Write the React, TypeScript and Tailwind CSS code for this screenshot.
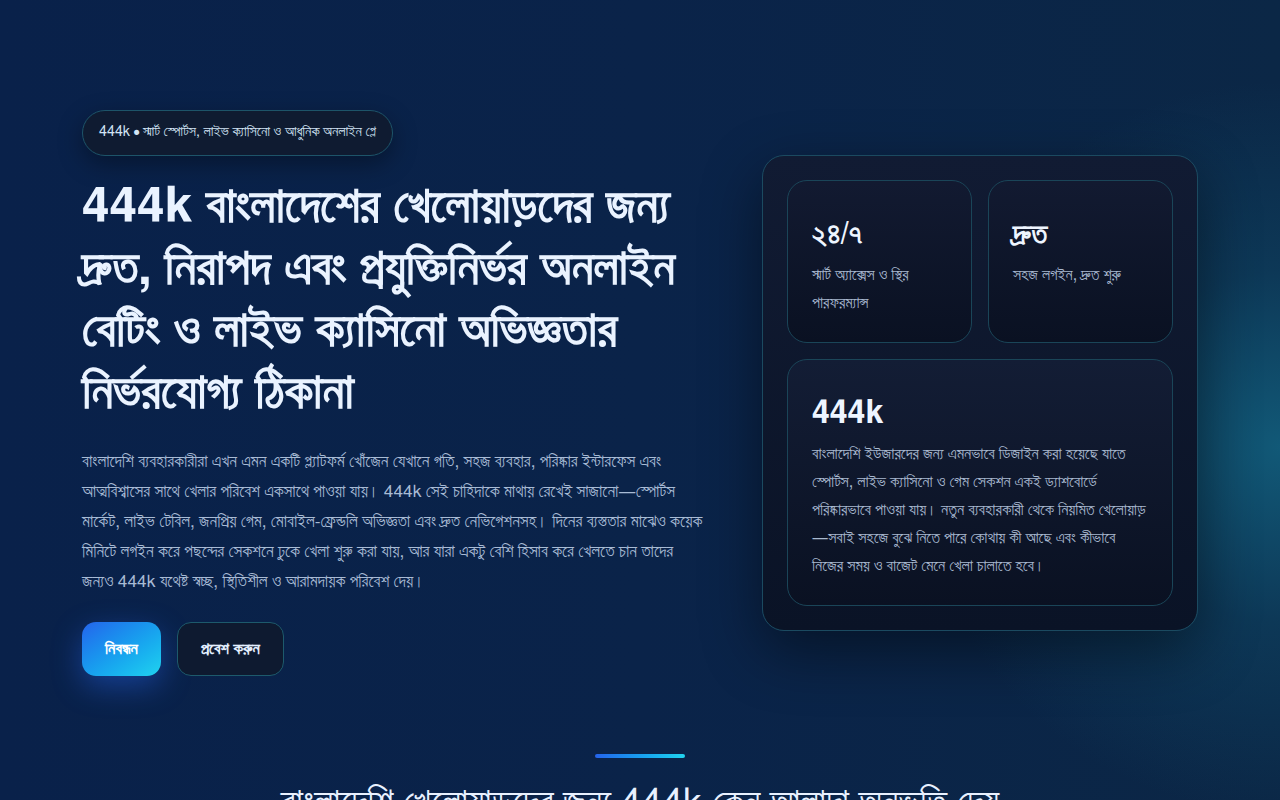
import React from "react";

export default function App() {
  return (
    <div
      className="min-h-[800px] w-full overflow-hidden text-[#e8f1ff] bg-[radial-gradient(circle_at_100%_54%,rgba(20,110,140,0.7),rgba(18,100,130,0.28)_13%,transparent_27%),linear-gradient(90deg,#09214a_0%,#0a2349_50%,#0b2746_100%)]"
      style={{ fontFamily: 'FreeSans, "Liberation Sans", Arial, sans-serif' }}
    >
      <section className="mx-auto w-[1116px] pt-[110px] pb-[78px] flex items-center justify-between">
        <div className="w-[626px] flex flex-col">
          <div className="self-start h-[46px] px-4 flex items-center rounded-full border border-[#1d5469] bg-[#0f1b31] text-[14.3px] text-[#d3e4f5] shadow-[0_8px_24px_rgba(0,0,0,0.35)]">
            444k • স্মার্ট স্পোর্টস, লাইভ ক্যাসিনো ও আধুনিক অনলাইন প্লে
          </div>
          <h1 className="mt-[20px] text-[49.5px] leading-[62px] font-bold text-[#eaf3ff]">
            444k বাংলাদেশের খেলোয়াড়দের জন্য দ্রুত, নিরাপদ এবং প্রযুক্তিনির্ভর অনলাইন বেটিং ও লাইভ ক্যাসিনো অভিজ্ঞতার নির্ভরযোগ্য ঠিকানা
          </h1>
          <p className="mt-[23px] text-[17.3px] leading-[30px] text-[#a8bbd5]">
            বাংলাদেশি ব্যবহারকারীরা এখন এমন একটি প্ল্যাটফর্ম খোঁজেন যেখানে গতি, সহজ ব্যবহার, পরিষ্কার ইন্টারফেস এবং আত্মবিশ্বাসের সাথে খেলার পরিবেশ একসাথে পাওয়া যায়। 444k সেই চাহিদাকে মাথায় রেখেই সাজানো—স্পোর্টস মার্কেট, লাইভ টেবিল, জনপ্রিয় গেম, মোবাইল-ফ্রেন্ডলি অভিজ্ঞতা এবং দ্রুত নেভিগেশনসহ। দিনের ব্যস্ততার মাঝেও কয়েক মিনিটে লগইন করে পছন্দের সেকশনে ঢুকে খেলা শুরু করা যায়, আর যারা একটু বেশি হিসাব করে খেলতে চান তাদের জন্যও 444k যথেষ্ট স্বচ্ছ, স্থিতিশীল ও আরামদায়ক পরিবেশ দেয়।
          </p>
          <div className="mt-[25px] flex gap-4">
            <button className="h-[54px] px-[23px] rounded-[14px] bg-gradient-to-br from-[#2563eb] to-[#22d3ee] text-white font-bold text-[16.5px] shadow-[0_10px_30px_rgba(37,99,235,0.45)]">
              নিবন্ধন
            </button>
            <button className="h-[54px] px-[23px] rounded-[14px] border border-[#1d5a6c] bg-[#0e1a30] text-[#e3efff] font-bold text-[16.5px]">
              প্রবেশ করুন
            </button>
          </div>
        </div>

        <div className="w-[436px] rounded-[22px] border border-[#1b4a60] bg-gradient-to-b from-[#111b33] to-[#0a1326] p-6 shadow-[0_20px_60px_rgba(0,0,0,0.45)]">
          <div className="grid grid-cols-2 gap-4">
            <div className="rounded-[20px] border border-[#1a4558] bg-gradient-to-b from-[#121a31] to-[#0a1122] px-6 pt-[37px] pb-[25px]">
              <div className="text-[30px] leading-[34px] font-bold text-[#eef5ff]">২৪/৭</div>
              <div className="mt-[9px] text-[16px] leading-[28px] text-[#a9b9d0]">স্মার্ট অ্যাক্সেস ও স্থির পারফরম্যান্স</div>
            </div>
            <div className="rounded-[20px] border border-[#1a4558] bg-gradient-to-b from-[#121a31] to-[#0a1122] px-6 pt-[37px] pb-[25px]">
              <div className="text-[30px] leading-[34px] font-bold text-[#eef5ff]">দ্রুত</div>
              <div className="mt-[9px] text-[16px] leading-[28px] text-[#a9b9d0]">সহজ লগইন, দ্রুত শুরু</div>
            </div>
          </div>
          <div className="mt-4 rounded-[20px] border border-[#1a4558] bg-gradient-to-b from-[#131d35] to-[#0a1122] px-6 pt-[33px] pb-[25px]">
            <div className="text-[32px] leading-[40px] font-bold text-[#eef5ff]">444k</div>
            <p className="mt-[7px] text-[16.2px] leading-[28px] text-[#a9b9d0]">
              বাংলাদেশি ইউজারদের জন্য এমনভাবে ডিজাইন করা হয়েছে যাতে স্পোর্টস, লাইভ ক্যাসিনো ও গেম সেকশন একই ড্যাশবোর্ডে পরিষ্কারভাবে পাওয়া যায়। নতুন ব্যবহারকারী থেকে নিয়মিত খেলোয়াড়—সবাই সহজে বুঝে নিতে পারে কোথায় কী আছে এবং কীভাবে নিজের সময় ও বাজেট মেনে খেলা চালাতে হবে।
            </p>
          </div>
        </div>
      </section>

      <section className="flex flex-col items-center">
        <div className="w-[90px] h-[4px] rounded-full bg-gradient-to-r from-[#2563eb] to-[#22d3ee]" />
        <h2 className="mt-[20px] text-[37.5px] leading-[50px] font-medium text-[#e8f1ff] text-center">
          বাংলাদেশি খেলোয়াড়দের জন্য 444k কেন আলাদা অনুভূতি দেয়
        </h2>
      </section>
    </div>
  );
}
